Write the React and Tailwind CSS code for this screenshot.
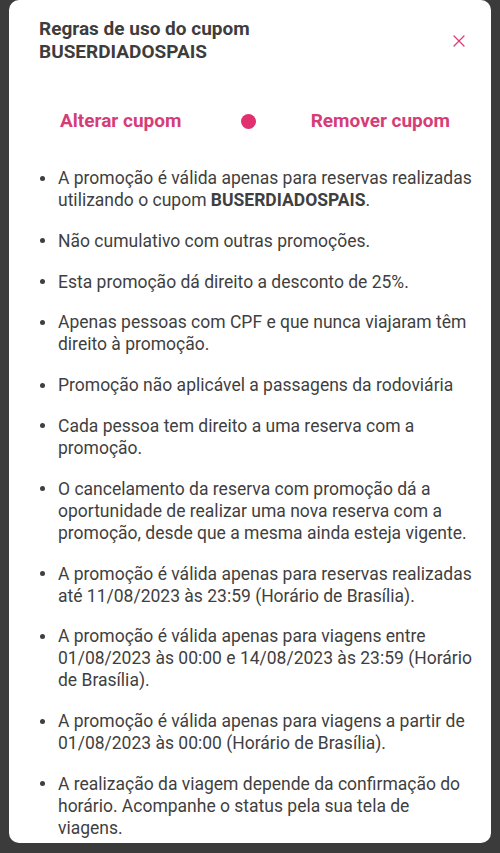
import { X } from "lucide-react";

const rules = [
  <>A promoção é válida apenas para reservas realizadas utilizando o cupom <b className="font-bold">BUSERDIADOSPAIS</b>.</>,
  "Não cumulativo com outras promoções.",
  "Esta promoção dá direito a desconto de 25%.",
  "Apenas pessoas com CPF e que nunca viajaram têm direito à promoção.",
  "Promoção não aplicável a passagens da rodoviária",
  "Cada pessoa tem direito a uma reserva com a promoção.",
  "O cancelamento da reserva com promoção dá a oportunidade de realizar uma nova reserva com a promoção, desde que a mesma ainda esteja vigente.",
  "A promoção é válida apenas para reservas realizadas até 11/08/2023 às 23:59 (Horário de Brasília).",
  "A promoção é válida apenas para viagens entre 01/08/2023 às 00:00 e 14/08/2023 às 23:59 (Horário de Brasília).",
  "A promoção é válida apenas para viagens a partir de 01/08/2023 às 00:00 (Horário de Brasília).",
  "A realização da viagem depende da confirmação do horário. Acompanhe o status pela sua tela de viagens.",
];

export default function App() {
  return (
    <div className="h-[853px] w-[500px] overflow-hidden bg-[#3b3b3b] font-['Roboto','Liberation_Sans',sans-serif]">
      <div className="mx-[9px] h-[843px] overflow-hidden rounded-[10px] bg-white">
        {/* Cabeçalho */}
        <div className="flex items-start justify-between pl-[30px] pr-[22px] pt-[17px]">
          <h2 className="text-[19px] font-bold leading-[23px] text-[#3d3d3d]">
            Regras de uso do cupom
            <br />
            BUSERDIADOSPAIS
          </h2>
          <button className="mt-[14px] text-[#d63d78]">
            <X size={20} strokeWidth={1.5} />
          </button>
        </div>

        {/* Ações */}
        <div className="mt-[46px] flex items-center justify-between pl-[51px] pr-[41px]">
          <span className="text-[19px] font-bold leading-[24px] text-[#d63d78]">Alterar cupom</span>
          <span className="ml-[4px] h-[15px] w-[15px] rounded-full bg-[#e0306f]" />
          <span className="text-[19px] font-bold leading-[24px] text-[#d63d78]">Remover cupom</span>
        </div>

        {/* Regras */}
        <ul className="mt-[34px] flex flex-col gap-[18.8px] pl-[30px] pr-[18px]">
          {rules.map((r, i) => (
            <li key={i} className="flex text-[17.5px] leading-[22px] text-[#3f3f3f]">
              <span className="flex h-[22px] w-[19px] shrink-0 items-center pl-[1px]">
                <span className="h-[5px] w-[5px] rounded-full bg-[#3f3f3f]" />
              </span>
              <span>{r}</span>
            </li>
          ))}
        </ul>
      </div>
    </div>
  );
}
